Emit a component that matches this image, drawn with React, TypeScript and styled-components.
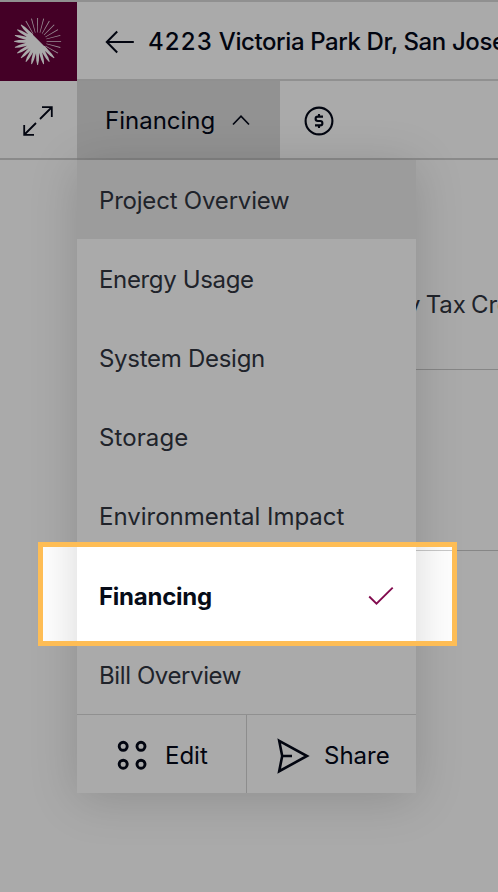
import React from 'react';
import styled, { createGlobalStyle } from 'styled-components';

const GlobalStyle = createGlobalStyle`
  *, *::before, *::after { box-sizing: border-box; }
  html, body { margin: 0; overflow: hidden; }
  body { background: #fff; font-family: Inter, "Liberation Sans", sans-serif; font-size: 24px; color: #030818; }
`;

const Page = styled.div`
  position: relative;
  width: 498px;
  height: 892px;
  overflow: hidden;
  display: flex;
  flex-direction: column;
  background: #fff;
`;

const Header = styled.header`
  height: 81px;
  flex: none;
  display: flex;
  border-top: 2px solid #d8d8d8;
`;

const Logo = styled.div`
  width: 77px;
  height: 79px;
  flex: none;
  background: #66003a;
  svg { display: block; }
`;

const AddressBar = styled.div`
  flex: 1;
  min-width: 0;
  display: flex;
  align-items: center;
  padding: 2px 0 0 28px;
  border-bottom: 2px solid #d8d8d8;
  white-space: nowrap;
  overflow: hidden;
  svg { flex: none; margin-right: 14px; }
`;

const Text = styled.span<{ $spacing?: number; $weight?: number }>`
  letter-spacing: ${(p) => p.$spacing ?? 0}px;
  font-weight: ${(p) => p.$weight ?? 400};
  white-space: pre;
`;

const Toolbar = styled.nav`
  height: 79px;
  flex: none;
  display: flex;
  border-bottom: 2px solid #d0d0d0;
`;

const ToolButton = styled.div<{ $width: number }>`
  width: ${(p) => p.$width}px;
  display: flex;
  align-items: center;
  justify-content: center;
  padding: 2px 2px 0 0;
`;

const ActiveTab = styled.div`
  width: 203px;
  height: 79px;
  display: flex;
  align-items: center;
  gap: 17px;
  padding: 1px 0 0 28px;
  background: #dbdbdb;
  border-bottom: 2px solid #c4c4c4;
`;

const Content = styled.main`
  flex: 1;
  display: flex;
  flex-direction: column;
  padding-left: 120px;
`;

const Panel = styled.section<{ $height: number }>`
  height: ${(p) => p.$height}px;
  flex: none;
  display: flex;
  justify-content: flex-end;
  padding-top: 130px;
  border-bottom: 1px solid #c9c9c9;
  color: #30353f;
  overflow: hidden;
`;

const PanelLabel = styled.div`
  width: 91px;
  line-height: 30px;
  white-space: nowrap;
  letter-spacing: -0.2px;
  word-spacing: -1px;
`;

const Menu = styled.div`
  position: absolute;
  left: 77px;
  top: 160px;
  width: 339px;
  height: 633px;
  display: flex;
  flex-direction: column;
  background: #fff;
  box-shadow: 0 6px 46px rgba(0, 0, 0, 0.16);
`;

const MenuItem = styled.div<{ $hover?: boolean; $selected?: boolean }>`
  height: ${(p) => (p.$selected ? 80 : 79)}px;
  flex: none;
  display: flex;
  align-items: center;
  justify-content: space-between;
  padding: 2px 22px 0 22px;
  background: ${(p) => (p.$hover ? '#ebebeb' : '#fff')};
  color: ${(p) => (p.$selected ? '#060c18' : '#30353f')};
`;

const MenuFooter = styled.div`
  flex: 1;
  display: flex;
  border-top: 1px solid #d9d9d9;
`;

const FooterAction = styled.div<{ $width: number; $gap: number; $start: number; $divider?: boolean }>`
  width: ${(p) => p.$width}px;
  display: flex;
  align-items: center;
  gap: ${(p) => p.$gap}px;
  padding: 3px 0 0 ${(p) => p.$start}px;
  border-right: ${(p) => (p.$divider ? '1px solid #d4d4d4' : '0')};
`;

const Spotlight = styled.div`
  position: absolute;
  left: 37.5px;
  top: 541.5px;
  width: 419px;
  height: 104px;
  border: 5px solid #febd55;
  box-shadow: 0 0 0 1000px rgba(0, 0, 0, 0.335);
`;

const RAYS = Array.from({ length: 24 }, (_, i) => i * 15);

const SunLogo = () => (
  <svg width="77" height="79" viewBox="0 0 77 79">
    <g transform="translate(37.6 39.4)" fill="#fff">
      {RAYS.map((a) =>
        a >= 135 && a <= 315 ? (
          <path key={a} transform={`rotate(${a})`} d="M-1.7 -8 L-1.3 -19 L-0.4 -23.5 H0.4 L1.3 -19 L1.7 -8Z" />
        ) : (
          <path key={a} transform={`rotate(${a})`} d="M-.3 -9 L-.45 -23.5 H.45 L.3 -9Z" opacity=".85" />
        ),
      )}
      <path d="M-8 -10 L10 8 A12.5 12.5 0 1 1 -8 -10Z" />
    </g>
  </svg>
);

const BackArrow = () => (
  <svg width="29" height="24" viewBox="0 0 29 24" fill="none" stroke="currentColor" strokeWidth="2">
    <path d="M28.8 12H2M12.2 1.5 1.8 12l10.4 10.5" />
  </svg>
);

const ExpandIcon = () => (
  <svg width="30" height="30" viewBox="0 0 30 30" fill="none" stroke="currentColor" strokeWidth="1.8">
    <path d="M17 13 28.5 1.5M19 1.2h9.8V11M13 17 1.5 28.5M11 28.8H1.2V19" />
  </svg>
);

const ChevronUp = () => (
  <svg width="18" height="12" viewBox="0 0 18 12" fill="none" stroke="currentColor" strokeWidth="1.7">
    <path d="M1 10.5 9 2.2l8 8.3" />
  </svg>
);

const DollarIcon = () => (
  <svg width="30" height="30" viewBox="0 0 30 30" fill="none" stroke="currentColor" strokeWidth="2.1">
    <circle cx="15" cy="15" r="13.4" />
    <path d="M19 10.6h-5.2a2.2 2.2 0 0 0 0 4.4h2.4a2.2 2.2 0 0 1 0 4.4H11M15 8v2.6M15 19.4V22" />
  </svg>
);

const CheckIcon = () => (
  <svg width="26" height="20" viewBox="0 0 26 20" fill="none" stroke="#820b4e" strokeWidth="1.9">
    <path d="M1.2 10.5 8.5 17.6 24.7 1.6" />
  </svg>
);

const DotsIcon = () => (
  <svg width="31" height="31" viewBox="0 0 31 31" fill="none" stroke="currentColor" strokeWidth="2.9">
    <circle cx="6.2" cy="6.3" r="4" />
    <circle cx="24" cy="6.3" r="4" />
    <circle cx="6.2" cy="24.2" r="4" />
    <circle cx="24" cy="24.2" r="4" />
  </svg>
);

const SendIcon = () => (
  <svg width="33" height="36" viewBox="0 0 33 36" fill="none" stroke="currentColor" strokeWidth="2.6">
    <path d="M2.2 2.8 30 18 2.2 33.2 5.2 18Z M5.2 18H15" />
  </svg>
);

const ITEMS: { label: string; spacing: number; hover?: boolean; selected?: boolean }[] = [
  { label: 'Project Overview', spacing: -0.2, hover: true },
  { label: 'Energy Usage', spacing: -0.35 },
  { label: 'System Design', spacing: -0.28 },
  { label: 'Storage', spacing: 0.1 },
  { label: 'Environmental Impact', spacing: 0 },
  { label: 'Financing', spacing: -0.25, selected: true },
  { label: 'Bill Overview', spacing: -0.4 },
];

export default function App() {
  return (
    <>
      <GlobalStyle />
      <Page>
        <Header>
          <Logo><SunLogo /></Logo>
          <AddressBar>
            <BackArrow />
            <Text $weight={500} $spacing={1.1}>4223</Text>
            <Text $weight={500} $spacing={-0.4}> Victoria Park Dr, San Jose</Text>
          </AddressBar>
        </Header>
        <Toolbar>
          <ToolButton $width={77}><ExpandIcon /></ToolButton>
          <ActiveTab>
            <Text>Financing</Text>
            <ChevronUp />
          </ActiveTab>
          <ToolButton $width={80}><DollarIcon /></ToolButton>
        </Toolbar>
        <Content>
          <Panel $height={210}><PanelLabel>y Tax Credit</PanelLabel></Panel>
          <Panel $height={181} />
        </Content>
        <Menu>
          {ITEMS.map((item) => (
            <MenuItem key={item.label} $hover={item.hover} $selected={item.selected}>
              <Text $spacing={item.spacing} $weight={item.selected ? 700 : 400}>{item.label}</Text>
              {item.selected && <CheckIcon />}
            </MenuItem>
          ))}
          <MenuFooter>
            <FooterAction $width={170} $gap={17} $start={40} $divider>
              <DotsIcon />
              <Text>Edit</Text>
            </FooterAction>
            <FooterAction $width={169} $gap={14} $start={30}>
              <SendIcon />
              <Text>Share</Text>
            </FooterAction>
          </MenuFooter>
        </Menu>
        <Spotlight />
      </Page>
    </>
  );
}
